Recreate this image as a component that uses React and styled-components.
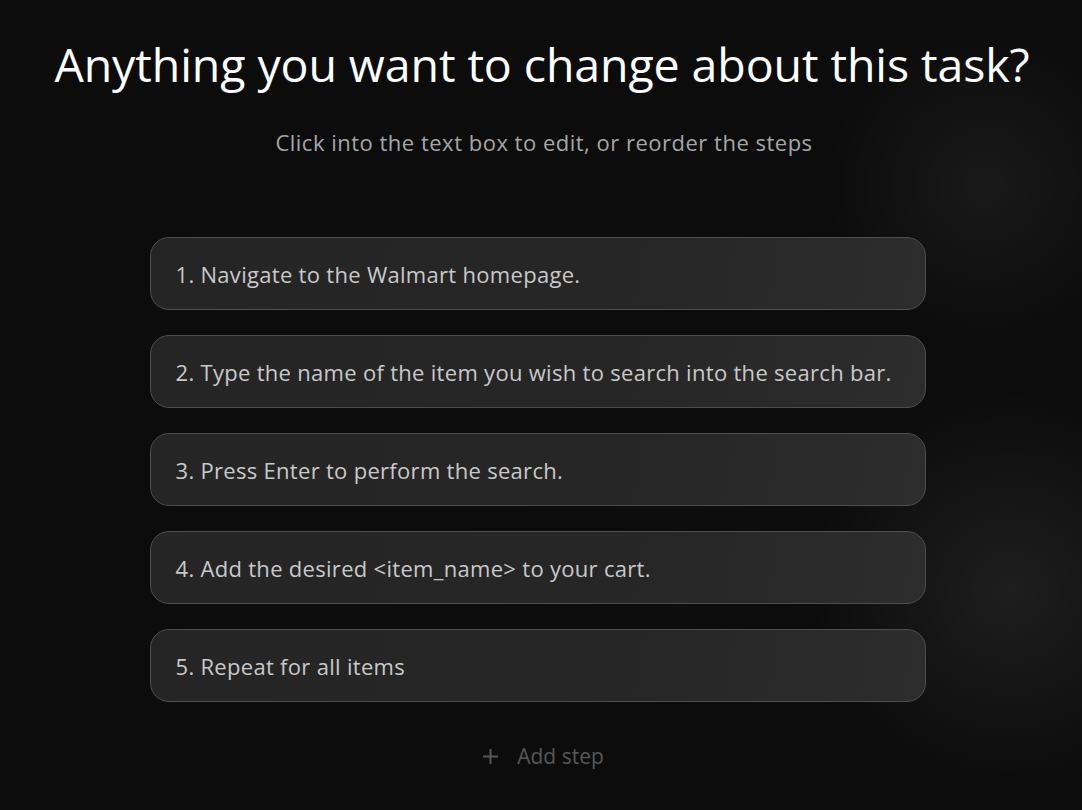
import React from 'react';
import styled, { createGlobalStyle } from 'styled-components';

const GlobalStyle = createGlobalStyle`
  html, body {
    margin: 0;
    padding: 0;
    background: #0c0c0c;
  }
  body {
    font-family: 'Open Sans', 'Noto Sans', sans-serif;
  }
`;

const steps = [
  '1. Navigate to the Walmart homepage.',
  '2. Type the name of the item you wish to search into the search bar.',
  '3. Press Enter to perform the search.',
  '4. Add the desired <item_name> to your cart.',
  '5. Repeat for all items',
];

const Page = styled.div`
  width: 1082px;
  height: 810px;
  overflow: hidden;
  box-sizing: border-box;
  padding-top: 34px;
  display: flex;
  flex-direction: column;
  align-items: center;
  background:
    radial-gradient(circle at 985px 185px, rgba(255,255,255,0.055) 0, rgba(255,255,255,0) 160px),
    radial-gradient(circle at 1010px 590px, rgba(255,255,255,0.075) 0, rgba(255,255,255,0) 200px),
    #0c0c0c;
`;

const Title = styled.h1`
  margin: 0;
  font-size: 46.5px;
  font-weight: 400;
  color: #ffffff;
  line-height: 60px;
  letter-spacing: -0.1px;
  margin-left: 2px;
`;

const Subtitle = styled.p`
  margin: 34px 0 0;
  font-size: 22px;
  color: #a6a6a6;
  line-height: 28px;
  letter-spacing: 0.5px;
  margin-left: 6px;
`;

const StepList = styled.div`
  margin-top: 81px;
  margin-right: 7px;
  width: 776px;
  display: flex;
  flex-direction: column;
  gap: 25px;
`;

const StepCard = styled.div`
  height: 73px;
  box-sizing: border-box;
  border: 1px solid #4e4e4e;
  border-radius: 19px;
  background: linear-gradient(100deg, #252525 0%, #262626 60%, #2d2d2d 100%);
  display: flex;
  align-items: center;
  padding: 0 20px 0 25px;
  font-size: 22px;
  letter-spacing: 0.3px;
  white-space: nowrap;
  color: #c9c9c9;
`;

const AddStep = styled.button`
  margin-top: 40px;
  margin-left: 4px;
  background: none;
  border: none;
  display: flex;
  align-items: center;
  gap: 18px;
  font-family: inherit;
  font-size: 21px;
  color: #575757;
  padding: 0;
  cursor: pointer;
`;

const PlusIcon = () => (
  <svg width="17" height="17" viewBox="0 0 17 17">
    <path d="M8.5 1v15M1 8.5h15" stroke="#575757" strokeWidth="2" fill="none" />
  </svg>
);

export default function App() {
  return (
    <>
      <GlobalStyle />
      <Page>
        <Title>Anything you want to change about this task?</Title>
        <Subtitle>Click into the text box to edit, or reorder the steps</Subtitle>
        <StepList>
          {steps.map((s) => (
            <StepCard key={s}>{s}</StepCard>
          ))}
        </StepList>
        <AddStep>
          <PlusIcon />
          Add step
        </AddStep>
      </Page>
    </>
  );
}
